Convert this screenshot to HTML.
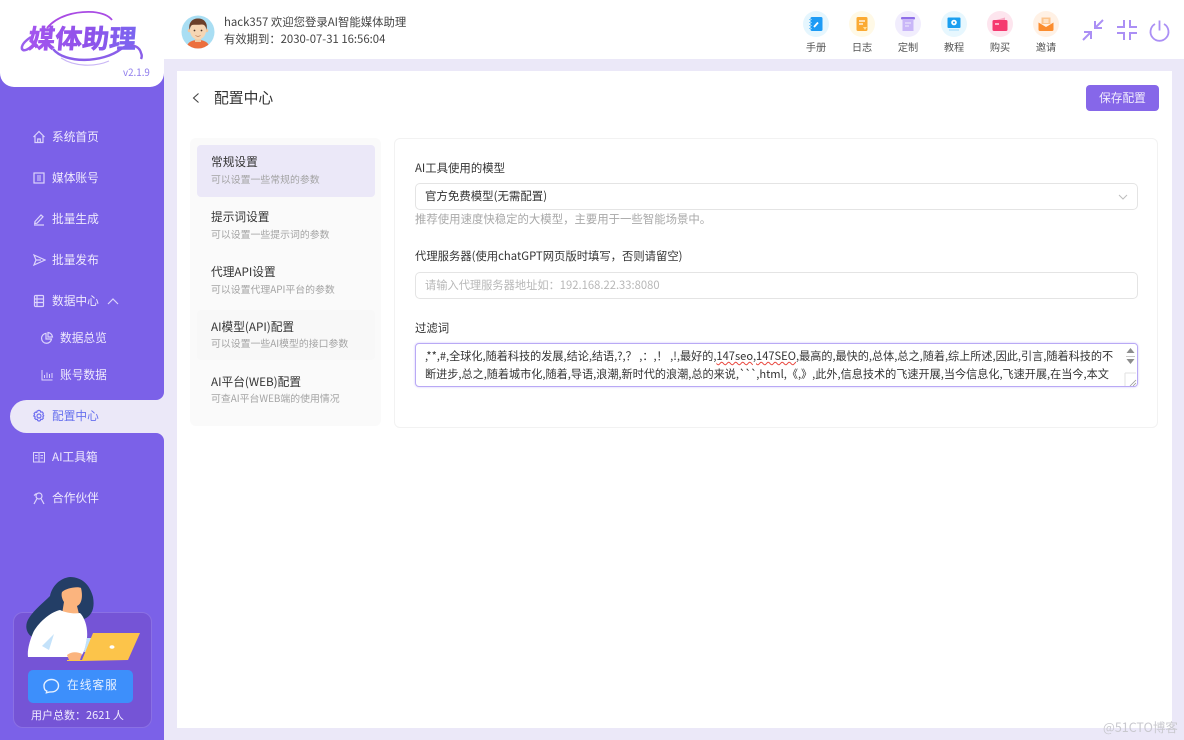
<!DOCTYPE html>
<html lang="zh">
<head>
<meta charset="utf-8">
<title>配置中心</title>
<style>
*{box-sizing:border-box;margin:0;padding:0}
html,body{width:1184px;height:740px;overflow:hidden;background:#ebe8f8}
body{position:relative;font-family:"Noto Sans CJK SC","Liberation Sans",sans-serif;font-size:11.7px;color:#333}
.a{position:absolute;white-space:nowrap}
.nav{position:absolute;left:52px;color:#efeafd;font-size:11.7px;line-height:16px;white-space:nowrap}
.ni{position:absolute;fill:none;stroke:#dcd4fb;stroke-width:1.2}
.tb{position:absolute;top:11px;width:26px;height:26px;border-radius:50%}
.tl{position:absolute;top:40px;width:40px;text-align:center;font-size:10.2px;color:#555;line-height:14px}
.t1{position:absolute;left:211px;font-size:11.7px;color:#333;line-height:16px;white-space:nowrap}
.t2{position:absolute;left:211px;font-size:9.88px;color:#a3a3a3;line-height:14px;white-space:nowrap}
</style>
</head>
<body>
<!-- header -->
<div class="a" style="left:0;top:0;width:1184px;height:59px;background:#fff"></div>
<!-- sidebar -->
<div class="a" style="left:0;top:59px;width:164px;height:681px;background:#7b61e8"></div>
<div class="a" style="left:0;top:0;width:164px;height:87px;background:#fff;border-radius:0 0 14px 14px"></div>
<!-- logo -->
<svg class="a" style="left:15px;top:8px" width="135" height="60" viewBox="0 0 135 60">
<defs><linearGradient id="g" x1="0" y1="0" x2="1" y2="0"><stop offset="0" stop-color="#a455ee"/><stop offset=".55" stop-color="#8f52ea"/><stop offset="1" stop-color="#7a66f0"/></linearGradient></defs>
<path d="M32 20C42 8 60 3 78 4C88 5 94 8 97 12" fill="none" stroke="#a94be4" stroke-width="1.800"/>
<path d="M16 29C10 33 6 37 7 41C9 44 14 41 18 37" fill="none" stroke="#9a60ee" stroke-width="2.500"/>
<path d="M38 41C50 56 88 55 106 41C114 35 124 37 126 45C127 47 127 49 126 51" fill="none" stroke="#8a5ee9" stroke-width="2.400"/>
<path d="M46 50C60 59 80 59 94 53" fill="none" stroke="#c9b6f5" stroke-width="1.200"/>
<text x="13" y="40" font-family="'Noto Sans CJK SC',sans-serif" font-weight="700" font-size="26" fill="url(#g)" stroke="url(#g)" stroke-width=".6" transform="skewX(-5) translate(3,0)" textLength="108" lengthAdjust="spacingAndGlyphs">媒体助理</text>
</svg>
<div class="a" style="left:123px;top:66px;font-size:9.800px;line-height:12px;color:#8f7cec">v2.1.9</div>

<!-- avatar -->
<svg class="a" style="left:181px;top:15px" width="34" height="34" viewBox="0 0 34 34">
<clipPath id="c"><circle cx="17" cy="17" r="16.500"/></clipPath>
<circle cx="17" cy="17" r="16.500" fill="#a9def3"/>
<g clip-path="url(#c)">
<path d="M5 34C6 27 11 25 17 25C23 25 28 27 29 34Z" fill="#ec6f3d"/>
<rect x="14" y="21" width="6" height="6" fill="#f0c9a2"/>
<circle cx="8.500" cy="15.500" r="1.800" fill="#f0c9a2"/><circle cx="25.500" cy="15.500" r="1.800" fill="#f0c9a2"/>
<ellipse cx="17" cy="15.500" rx="8" ry="9" fill="#f6d6b4"/>
<path d="M8.500 15C7 7 12 3 18 3.500C24 4 27 9 25.500 15C25 11 23 9.500 21 9.500C17 10 13 9.500 11 10C9.500 11 9 13 8.500 15Z" fill="#6a3f2a"/>
<circle cx="13.500" cy="15.500" r=".9" fill="#4a3428"/><circle cx="20.500" cy="15.500" r=".9" fill="#4a3428"/>
<path d="M14.500 20.500C16 21.500 18 21.500 19.500 20.500" fill="none" stroke="#b5714e" stroke-width=".7"/>
</g>
</svg>
<div class="a" style="left:224px;top:14px;font-size:11.380px;line-height:16px;color:#444">hack357 欢迎您登录AI智能媒体助理</div>
<div class="a" style="left:224px;top:31px;font-size:11.340px;line-height:16px;color:#444">有效期到：2030-07-31 16:56:04</div>

<!-- toolbar -->
<div class="tb" style="left:803px;background:#e5f6fe"></div>
<svg class="a" style="left:803px;top:11px" width="26" height="26"><rect x="7.500" y="6" width="12" height="14" rx="1.500" fill="#1d9bf5"/><path d="M6 8.500h3M6 11.500h3M6 14.500h3M6 17.500h3" stroke="#7cc8f8" stroke-width="1"/><path d="M11 16l4-4.500" stroke="#fff" stroke-width="1.800"/></svg>
<div class="tl" style="left:796px">手册</div>
<div class="tb" style="left:849px;background:#fff9e6"></div>
<svg class="a" style="left:849px;top:11px" width="26" height="26"><rect x="7.500" y="6" width="11" height="14" rx="1.500" fill="#fbaa33"/><path d="M10 10h6M10 13h4" stroke="#fff" stroke-width="1.200"/><path d="M14 16h4l-2 3z" fill="#ffdf9a"/></svg>
<div class="tl" style="left:842px">日志</div>
<div class="tb" style="left:895px;background:#f1edfd"></div>
<svg class="a" style="left:895px;top:11px" width="26" height="26"><rect x="6" y="6" width="14" height="2.500" rx="1" fill="#8f6fe8"/><rect x="7.500" y="8" width="11" height="12" fill="#c9b6f8"/><path d="M10 12h6M10 15h4" stroke="#f1edfd" stroke-width="1.100"/></svg>
<div class="tl" style="left:888px">定制</div>
<div class="tb" style="left:941px;background:#e7f7fe"></div>
<svg class="a" style="left:941px;top:11px" width="26" height="26"><rect x="6.500" y="6.500" width="13" height="10.500" rx="1" fill="#1b9ff0"/><circle cx="13" cy="11.500" r="2.800" fill="#fff"/><circle cx="13" cy="11.500" r="1" fill="#1b9ff0"/><path d="M8 19h10" stroke="#9fd8fa" stroke-width="1"/></svg>
<div class="tl" style="left:934px">教程</div>
<div class="tb" style="left:987px;background:#fde5ee"></div>
<svg class="a" style="left:987px;top:11px" width="26" height="26"><path d="M9 9l9-2.500v3z" fill="#f9a9c3"/><rect x="5.500" y="9" width="15" height="11" rx="1.500" fill="#f5396f"/><path d="M8 13h4" stroke="#fff" stroke-width="1.200"/></svg>
<div class="tl" style="left:980px">购买</div>
<div class="tb" style="left:1033px;background:#fff1e5"></div>
<svg class="a" style="left:1033px;top:11px" width="26" height="26"><path d="M8.500 13V6.500h9V13z" fill="#fcc58e"/><path d="M10.500 9h5M10.500 11h5" stroke="#fff" stroke-width="1"/><path d="M5.500 11.500L13 16l7.500-4.500V18.500a1.500 1.500 0 0 1-1.500 1.500H7a1.500 1.500 0 0 1-1.500-1.500z" fill="#fb8d2f"/></svg>
<div class="tl" style="left:1026px">邀请</div>

<!-- window controls -->
<svg class="a" style="left:1080px;top:17px" width="26" height="26" fill="none" stroke="#ab8ff5" stroke-width="2"><path d="M3 23L11 15M4 15h7v7M23 3L15 11M15 4v7h7"/></svg>
<svg class="a" style="left:1115px;top:18px" width="24" height="24" fill="none" stroke="#ab8ff5" stroke-width="2"><path d="M2 9h7V2M15 2v7h7M2 15h7v7M22 15h-7v7"/></svg>
<svg class="a" style="left:1148px;top:18px" width="23" height="24" fill="none" stroke="#ab8ff5" stroke-width="1.800"><path d="M11.500 2.500v10M7 6a9 9 0 1 0 9 0"/></svg>

<!-- nav icons -->
<svg class="ni" style="left:32px;top:130px" width="14" height="14"><path d="M1.500 7L7 1.500 12.500 7M3 6v6.500h8V6M5.700 12.500V9h2.600v3.500"/></svg>
<div class="nav" style="top:129px">系统首页</div>
<svg class="ni" style="left:32px;top:171px" width="14" height="14"><rect x="2" y="2" width="10" height="10"/><path d="M5 5h4M5 7h4M5 9h4" stroke-width=".9"/></svg>
<div class="nav" style="top:170px">媒体账号</div>
<svg class="ni" style="left:32px;top:212px" width="14" height="14"><path d="M3 9.500L9 3l2 1.800-6 6.400-2.300.3zM2 13h10"/></svg>
<div class="nav" style="top:211px">批量生成</div>
<svg class="ni" style="left:32px;top:253px" width="14" height="14"><path d="M2 2l11 5-11 5 2-5zM4 7h5"/></svg>
<div class="nav" style="top:252px">批量发布</div>
<svg class="ni" style="left:32px;top:294px" width="14" height="14"><rect x="2.500" y="1.500" width="9" height="11" rx="1"/><path d="M2.500 5h9M2.500 8.500h9M5 1.500v11"/></svg>
<div class="nav" style="top:293px">数据中心</div>
<svg class="ni" style="left:106px;top:295px" width="14" height="12"><path d="M2 9l5-5 5 5"/></svg>
<svg class="ni" style="left:40px;top:331px" width="14" height="14"><path d="M6 2.300A5 5 0 1 0 11.500 8H6zM8 1.500A5 5 0 0 1 12.500 6H8z"/></svg>
<div class="nav" style="left:60px;top:330px">数据总览</div>
<svg class="ni" style="left:40px;top:368px" width="14" height="14"><path d="M2 2v10h10.500M4.500 10V7M7 10V4.500M9.500 10V6M12 10V5" stroke-width="1"/></svg>
<div class="nav" style="left:60px;top:367px">账号数据</div>

<!-- active nav -->
<div class="a" style="left:156px;top:392px;width:8px;height:8px;background:#ebe8f8"><div style="width:8px;height:8px;background:#7b61e8;border-radius:0 0 8px 0"></div></div>
<div class="a" style="left:156px;top:433px;width:8px;height:8px;background:#ebe8f8"><div style="width:8px;height:8px;background:#7b61e8;border-radius:0 8px 0 0"></div></div>
<div class="a" style="left:10px;top:400px;width:154px;height:33px;background:#ebe8f8;border-radius:16.500px 0 0 16.500px"></div>
<svg class="ni" style="left:32px;top:409px;stroke:#6f6ff0" width="14" height="14"><path d="M7 1.300l1.300.5.400 1.300 1.400-.2 1.200 1.300-.5 1.300.9 1.200-.9 1.200.5 1.300-1.200 1.300-1.400-.2-.4 1.300-1.300.5-1.300-.5-.4-1.300-1.400.2-1.200-1.300.5-1.300L1.700 7l.9-1.200-.5-1.300 1.200-1.300 1.400.2.400-1.300z"/><circle cx="7" cy="7" r="2"/></svg>
<div class="nav" style="top:408px;color:#6670ee">配置中心</div>

<svg class="ni" style="left:32px;top:450px" width="14" height="14"><path d="M1.500 2.500h4.500a1 1 0 0 1 1 1v8.500H1.500zM12.500 2.500H8a1 1 0 0 0-1 1v8.500h5.500zM3 5.500h2.500M3 8h2.500M8.500 5.500H11M8.500 8H11" stroke-width="1"/></svg>
<div class="nav" style="top:449px">AI工具箱</div>
<svg class="ni" style="left:32px;top:491px" width="14" height="14"><circle cx="7" cy="5" r="3"/><path d="M2 13l3-5.500M12 13L9 7.500M2 4.500L4.500 2.500"/></svg>
<div class="nav" style="top:490px">合作伙伴</div>

<!-- support card -->
<div class="a" style="left:13px;top:612px;width:139px;height:116px;background:#7554d6;border:1px solid #8a70e4;border-radius:10px"></div>
<svg class="a" style="left:22px;top:572px" width="122" height="94" viewBox="0 0 122 94">
<path d="M48 5C60 5 68 13 71 25C73 36 70 44 62 47L30 46C22 50 14 58 10 65C3 60 3 52 7 46C12 38 22 30 28 24C30 14 38 6 48 5Z" fill="#233e66"/>
<path d="M40 20C44 16 56 14 59 16C61 24 60 32 55 34L57 42H40L42 30C40 27 39 23 40 20Z" fill="#fbb47e"/>
<path d="M38 38C44 41 52 42 58 41C63 46 66 56 65 66C64 74 62 82 58 85H6C5 78 8 68 11 61C15 52 28 40 38 38Z" fill="#fff"/>
<path d="M65 66H72L68 80H62z" fill="#bfe1fb"/>
<path d="M20 74L32 62 27 78z" fill="#c4e2fa"/>
<path d="M45 83C50 79 56 80 60 82L58 88H47z" fill="#fbb47e"/>
<path d="M71 61H118L106 88L60 89H45V88H60z" fill="#fcc44a"/>
<ellipse cx="90" cy="75" rx="2.500" ry="1.800" fill="#fff"/>
</svg>
<div class="a" style="left:28px;top:670px;width:105px;height:33px;background:#3d8ffb;border-radius:5px"></div>
<svg class="a" style="left:42px;top:677px" width="18" height="18" fill="none" stroke="#e6f0ff" stroke-width="1.400"><path d="M9.500 2.500c4 0 7 2.700 7 6.200s-3 6.200-7 6.200c-1.200 0-2.500-.1-3.500.5l-1.600.4.400-1.800C2.800 13.500 2 11 2 8.700 2 5.200 5.500 2.500 9.500 2.500z"/></svg>
<div class="a" style="left:67px;top:677px;font-size:11.700px;line-height:16px;color:#e6f0ff;letter-spacing:1px">在线客服</div>
<div class="a" style="left:31px;top:708px;font-size:11px;line-height:15px;color:#f0ecff">用户总数：2621 人</div>

<!-- main card -->
<div class="a" style="left:177px;top:71px;width:995px;height:657px;background:#fff"></div>
<svg class="a" style="left:189px;top:90px" width="14" height="16" fill="none" stroke="#444" stroke-width="1.100"><path d="M9.500 3.500L4.500 8l5 4.500"/></svg>
<div class="a" style="left:214px;top:88px;font-size:14.800px;line-height:20px;color:#333">配置中心</div>
<div class="a" style="left:1086px;top:85px;width:73px;height:26px;background:#8667e9;border-radius:4px;color:#f1edfd;font-size:11.700px;line-height:26px;text-align:center">保存配置</div>

<!-- left panel -->
<div class="a" style="left:190px;top:138px;width:191px;height:288px;background:#fafafa;border-radius:6px"></div>
<div class="a" style="left:197px;top:145px;width:178px;height:52px;background:#ebe8f8;border-radius:4px"></div>
<div class="a" style="left:197px;top:310px;width:178px;height:50px;background:#f8f8f8;border-radius:4px"></div>
<div class="t1" style="top:154px">常规设置</div><div class="t2" style="top:172px">可以设置一些常规的参数</div>
<div class="t1" style="top:209px">提示词设置</div><div class="t2" style="top:227px">可以设置一些提示词的参数</div>
<div class="t1" style="top:264px">代理API设置</div><div class="t2" style="top:282px">可以设置代理API平台的参数</div>
<div class="t1" style="top:319px">AI模型(API)配置</div><div class="t2" style="top:336px">可以设置一些AI模型的接口参数</div>
<div class="t1" style="top:374px">AI平台(WEB)配置</div><div class="t2" style="top:391px">可查AI平台WEB端的使用情况</div>

<!-- right panel -->
<div class="a" style="left:394px;top:138px;width:764px;height:290px;background:#fff;border:1px solid #f2f2f2;border-radius:6px"></div>
<div class="a" style="left:415px;top:160px;font-size:11.400px;line-height:16px;color:#333">AI工具使用的模型</div>
<div class="a" style="left:415px;top:183px;width:723px;height:27px;border:1px solid #e4e4e4;border-radius:5px;padding-left:9px;line-height:25px;font-size:11.450px;color:#333;background:#fff">官方免费模型(无需配置)</div>
<svg class="a" style="left:1117px;top:191px" width="12" height="12" fill="none" stroke="#bdbdbd" stroke-width="1"><path d="M2 4l4 4 4-4"/></svg>
<div class="a" style="left:415px;top:211px;font-size:11.400px;line-height:16px;color:#a8a8a8">推荐使用速度快稳定的大模型，主要用于一些智能场景中。</div>
<div class="a" style="left:415px;top:248px;font-size:11.330px;line-height:16px;color:#333">代理服务器(使用chatGPT网页版时填写，否则请留空)</div>
<div class="a" style="left:415px;top:272px;width:723px;height:27px;border:1px solid #e4e4e4;border-radius:5px;padding-left:9px;line-height:25px;font-size:11.240px;color:#b8b8b8;background:#fff">请输入代理服务器地址如：192.168.22.33:8080</div>
<div class="a" style="left:415px;top:320px;font-size:11.400px;line-height:16px;color:#333">过滤词</div>
<div class="a" style="left:415px;top:343px;width:723px;height:44px;border:1px solid #b9a9f5;border-radius:4px;box-shadow:0 0 2px #cfc4fa;background:#fff;overflow:hidden">
<div class="a" style="left:9px;top:3px;font-size:11.140px;line-height:18px;color:#333">,**,#,全球化,随着科技的发展,结论,结语,?,？ ,：,！ ,!,最好的,<span style="text-decoration:underline wavy #e8453c 1px">147seo</span>,<span style="text-decoration:underline wavy #e8453c 1px">147SEO</span>,最高的,最快的,总体,总之,随着,综上所述,因此,引言,随着科技的不<br>断进步,总之,随着城市化,随着,导语,浪潮,新时代的浪潮,总的来说,<span style="letter-spacing:-1px">&#96;&#96;&#96;</span>,html,《,》,此外,信息技术的飞速开展,当今信息化,飞速开展,在当今,本文</div>
<div class="a" style="right:0;top:0;width:13px;height:43px;background:#fff"></div>
</div>
<svg class="a" style="left:1124px;top:345px" width="13" height="42"><path d="M2.500 8L6.500 3l4 5z" fill="#8c8c8c"/><rect x="2" y="11" width="9" height="1" fill="#c8c8c8"/><path d="M2.500 14l4 5 4-5z" fill="#8c8c8c"/><path d="M1 28h11M1 28v13" stroke="#e2e2e2" fill="none"/><path d="M12 35l-6 6M12 38l-3 3" stroke="#999" stroke-width=".8"/></svg>

<!-- watermark -->
<div class="a" style="left:1103px;top:719px;font-size:12.500px;line-height:16px;color:#c9c9cf">@51CTO博客</div>
</body>
</html>
